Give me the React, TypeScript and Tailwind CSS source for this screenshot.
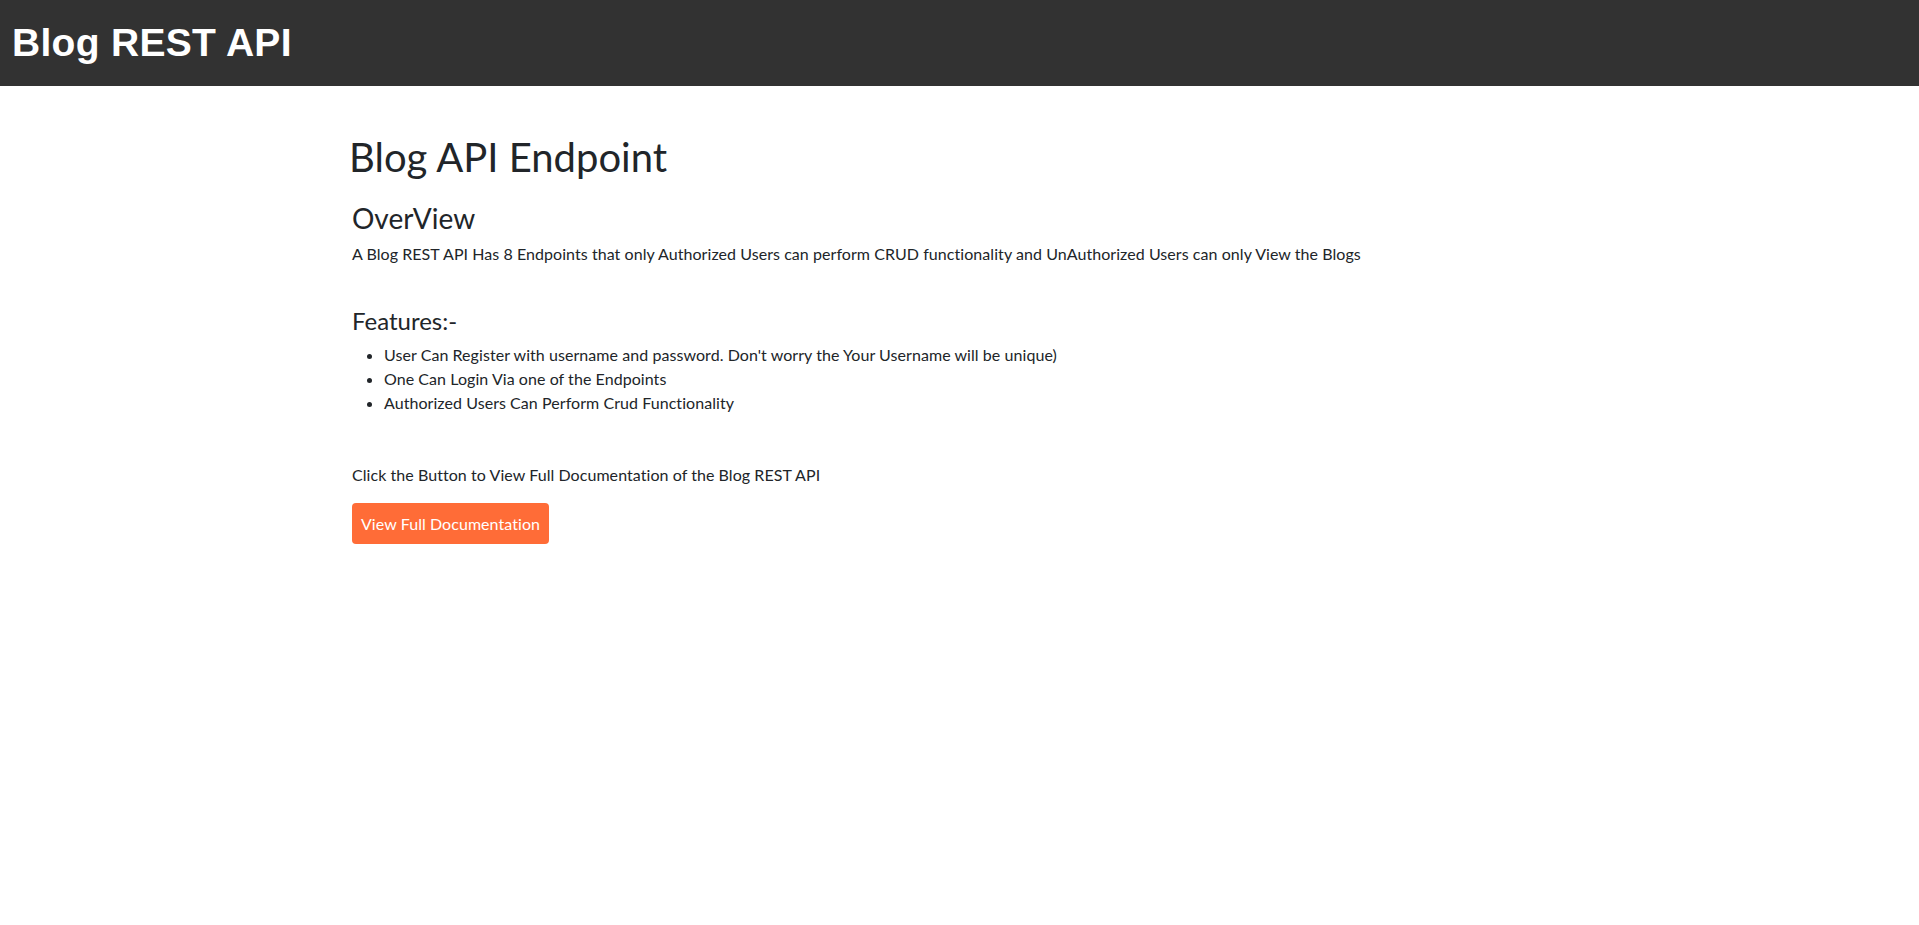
import React from 'react';

const features = [
  "User Can Register with username and password. Don't worry the Your Username will be unique)",
  'One Can Login Via one of the Endpoints',
  'Authorized Users Can Perform Crud Functionality',
];

export default function App() {
  return (
    <div className="min-h-screen bg-white text-[#212529] font-['Lato',sans-serif]">
      <header className="h-[86px] bg-[#323232] flex items-center pl-[12px]">
        <h1 className="font-['Liberation_Sans',Arial,sans-serif] text-[39px] leading-[40px] font-bold tracking-[0.3px] text-white">
          Blog REST API
        </h1>
      </header>

      <main className="mx-auto w-[1221px] pt-[47px]">
        <h1 className="text-[40px] leading-[48px] font-normal">Blog API Endpoint</h1>

        <div className="pl-[3px] tracking-[0.06px]">
          <h3 className="mt-[20px] text-[28px] leading-[34px] tracking-normal">OverView</h3>
          <p className="mt-[7px] text-[16px] leading-[24px]">
            A Blog REST API Has 8 Endpoints that only Authorized Users can perform CRUD functionality and UnAuthorized Users can only View the Blogs
          </p>

          <h4 className="mt-[40px] text-[24px] leading-[29px] tracking-normal">Features:-</h4>
          <ul className="mt-[8px] list-disc pl-[32px] text-[16px] leading-[24px]">
            {features.map(f => (
              <li key={f}>{f}</li>
            ))}
          </ul>

          <p className="mt-[48px] text-[16px] leading-[24px]">
            Click the Button to View Full Documentation of the Blog REST API
          </p>

          <button className="mt-[16px] h-[41px] w-[197px] rounded-[4px] bg-[#ff6c37] text-white text-[16px] leading-[24px] flex items-center justify-center">
            View Full Documentation
          </button>
        </div>
      </main>
    </div>
  );
}
